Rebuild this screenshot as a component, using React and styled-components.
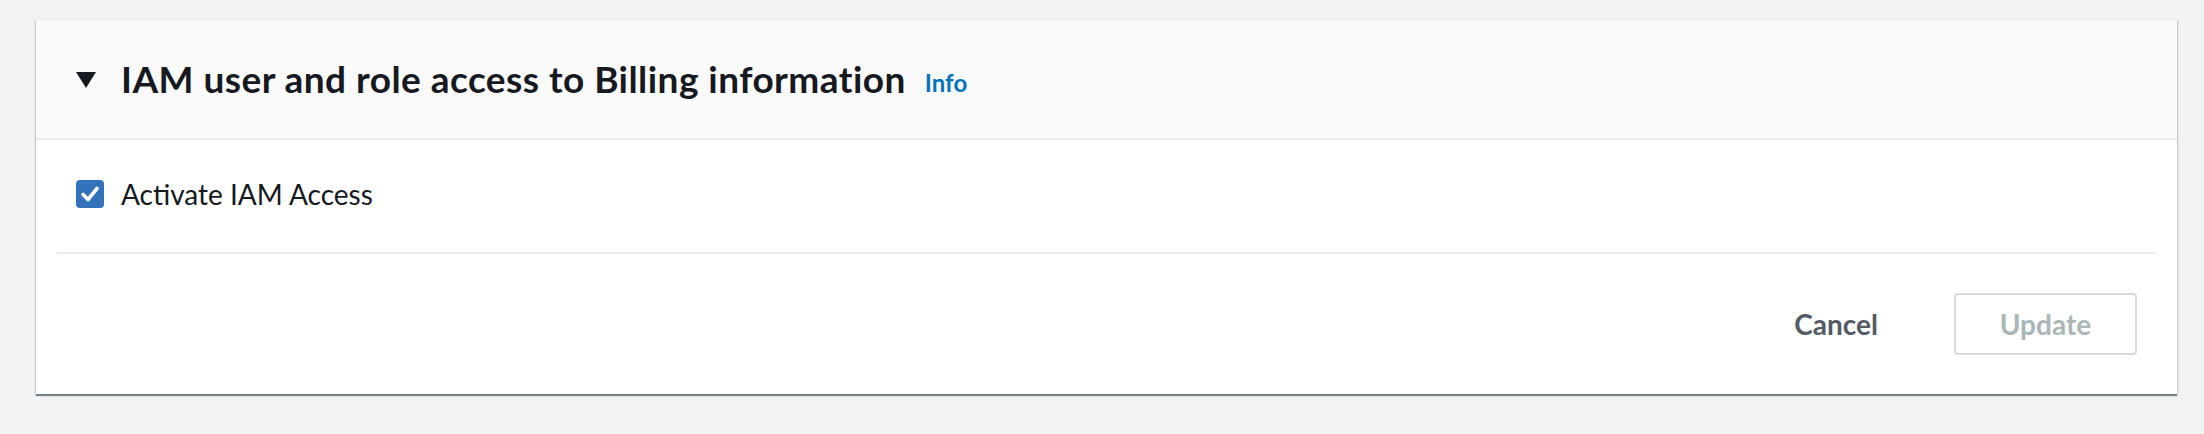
import React, { useState } from "react";
import styled, { createGlobalStyle } from "styled-components";

const GlobalStyle = createGlobalStyle`
  html, body {
    margin: 0;
    padding: 0;
    background: #f2f3f3;
    font-family: Lato, "Open Sans", sans-serif;
    color: #16191f;
  }
`;

export default function App() {
  const [checked, setChecked] = useState(true);
  const [open, setOpen] = useState(true);

  return (
    <Page>
      <GlobalStyle />
      <Card>
        <Header onClick={() => setOpen(!open)}>
          <Caret viewBox="0 0 20 16">
            <path d="M0 0 H20 L10 16 Z" fill="#16191f" />
          </Caret>
          <Title>IAM user and role access to Billing information</Title>
          <InfoLink>Info</InfoLink>
        </Header>

        {open && (
          <>
            <Body>
              <CheckRow onClick={() => setChecked(!checked)}>
                <CheckBox checked={checked}>
                  {checked && (
                    <svg viewBox="0 0 28 28" width="28" height="28">
                      <path
                        d="M7 14.5 L12 19.5 L21 8.5"
                        fill="none"
                        stroke="#fff"
                        strokeWidth="3.6"
                        strokeLinecap="round"
                        strokeLinejoin="round"
                      />
                    </svg>
                  )}
                </CheckBox>
                <CheckLabel>Activate IAM Access</CheckLabel>
              </CheckRow>
            </Body>
            <Divider />
            <Footer>
              <LinkButton>Cancel</LinkButton>
              <PrimaryButton disabled>Update</PrimaryButton>
            </Footer>
          </>
        )}
      </Card>
    </Page>
  );
}

const Page = styled.div`
  padding: 19px 27px 38px 36px;
`;

const Card = styled.div`
  background: #ffffff;
  border-top: 1px solid #eaeded;
  box-shadow: 0 2px 1px 0 rgba(0, 28, 36, 0.45),
    1px 1px 2px 0 rgba(0, 28, 36, 0.15), -1px 1px 2px 0 rgba(0, 28, 36, 0.15);
`;

const Header = styled.div`
  display: flex;
  align-items: center;
  height: 118px;
  padding: 0 40px;
  background: #fafafa;
  border-bottom: 2px solid #eaeded;
  cursor: pointer;
`;

const Caret = styled.svg`
  width: 20px;
  height: 16px;
  margin-right: 25px;
  margin-top: 2px;
`;

const Title = styled.h2`
  margin: 0;
  font-size: 37px;
  font-weight: 700;
  letter-spacing: 0.45px;
  line-height: 44px;
  color: #16191f;
`;

const InfoLink = styled.a`
  margin-left: 19px;
  margin-top: 6px;
  font-size: 24px;
  font-weight: 700;
  color: #0073bb;
  cursor: pointer;
`;

const Body = styled.div`
  display: flex;
  align-items: center;
  height: 108px;
  padding: 0 40px 4px;
`;

const CheckRow = styled.label`
  display: flex;
  align-items: center;
  cursor: pointer;
`;

const CheckBox = styled.span`
  display: flex;
  width: 28px;
  height: 28px;
  border-radius: 4px;
  background: ${(p) => (p.checked ? "#3273ba" : "#fff")};
  border: ${(p) => (p.checked ? "none" : "2px solid #aab7b8")};
  box-sizing: border-box;
  margin-right: 17px;
`;

const CheckLabel = styled.span`
  font-size: 28px;
  line-height: 36px;
  color: #16191f;
`;

const Divider = styled.div`
  height: 2px;
  margin: 0 20px 0 21px;
  background: #eaeded;
`;

const Footer = styled.div`
  display: flex;
  justify-content: flex-end;
  align-items: center;
  height: 140px;
  padding: 0 40px;
  gap: 76px;
`;

const LinkButton = styled.button`
  border: none;
  background: none;
  padding: 0;
  font-family: inherit;
  font-size: 28px;
  font-weight: 700;
  color: #545b64;
  cursor: pointer;
`;

const PrimaryButton = styled.button`
  width: 183px;
  height: 62px;
  border: 2px solid #d5dbdb;
  border-radius: 4px;
  background: #ffffff;
  font-family: inherit;
  font-size: 28px;
  font-weight: 700;
  color: #aab7b8;
`;
